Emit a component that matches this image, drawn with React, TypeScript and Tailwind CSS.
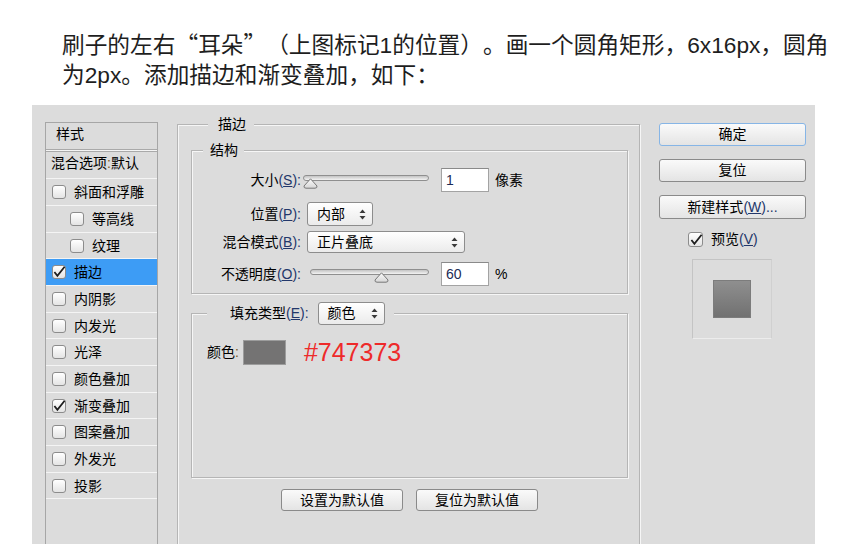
import React from "react"

const ui = { fontFamily: '"Liberation Sans", "Noto Sans CJK SC", sans-serif' }
const mn = "text-[#23376a]"

type Item = { t: string; h: string; sub?: boolean; checked?: boolean; active?: boolean }

const items: Item[] = [
  { t: "斜面和浮雕", h: "h-[27px]" },
  { t: "等高线", h: "h-[27px]", sub: true },
  { t: "纹理", h: "h-[26px]", sub: true },
  { t: "描边", h: "h-[27px]", checked: true, active: true },
  { t: "内阴影", h: "h-[27px]" },
  { t: "内发光", h: "h-[26px]" },
  { t: "光泽", h: "h-[27px]" },
  { t: "颜色叠加", h: "h-[27px]" },
  { t: "渐变叠加", h: "h-[26px]", checked: true },
  { t: "图案叠加", h: "h-[27px]" },
  { t: "外发光", h: "h-[27px]" },
  { t: "投影", h: "h-[26px]" },
]

function Check({ checked, size = "w-[14px] h-[14px]" }: { checked?: boolean; size?: string }) {
  return (
    <span className={`${size} shrink-0 rounded-[3px] border border-[#8c8c8c] bg-linear-to-b from-white to-[#e4e4e4] flex items-center justify-center overflow-visible`}>
      {checked && (
        <svg width="14" height="14" viewBox="0 0 14 14" className="overflow-visible">
          <path d="M2.4 7 L5.4 10.8 L12.6 1.8" fill="none" stroke="#1e1e1e" strokeWidth="1.8" />
        </svg>
      )}
    </span>
  )
}

function Arrows() {
  return (
    <svg width="7" height="11" viewBox="0 0 7 11">
      <polygon points="3.5,0.5 6.5,4 0.5,4" fill="#3a3a3a" />
      <polygon points="0.5,7 6.5,7 3.5,10.5" fill="#3a3a3a" />
    </svg>
  )
}

function Select({ text, w, h }: { text: string; w: string; h: string }) {
  return (
    <div className={`${w} ${h} rounded-[3px] border border-[#8d8d8d] bg-linear-to-b from-white to-[#ebebeb] flex items-center justify-between pl-[9px] pr-[6px] text-[14px] text-black`}>
      <span>{text}</span>
      <Arrows />
    </div>
  )
}

function Slider({ w, pos }: { w: string; pos: number }) {
  return (
    <div className={`${w} h-[24px] relative`}>
      <div className="absolute left-0 right-0 top-[7px] h-[6px] rounded-full border border-[#8f8f8f] bg-linear-to-b from-[#c4c4c4] to-[#f3f3f3]" />
      <svg width="15" height="11" viewBox="0 0 15 11" className="absolute top-[10px]" style={{ left: pos }}>
        <defs>
          <linearGradient id="thumb" x1="0" y1="0" x2="0" y2="1">
            <stop offset="0" stopColor="#fbfbfb" />
            <stop offset="1" stopColor="#d6d6d6" />
          </linearGradient>
        </defs>
        <path d="M7.5 0.8 L14 8 Q14.3 10.2 12 10.2 L3 10.2 Q0.7 10.2 1 8 Z" fill="url(#thumb)" stroke="#777" strokeWidth="1" />
      </svg>
    </div>
  )
}

function Input({ v }: { v: string }) {
  return (
    <div className="w-[48px] h-[24px] bg-white border border-[#a3a3a3] border-t-[#8a8a8a] flex items-center pl-[4px] text-[14px] text-[#1c2c55]">
      {v}
    </div>
  )
}

function Btn({ children, w, h, focus }: { children: React.ReactNode; w: string; h: string; focus?: boolean }) {
  return (
    <div className={`${w} ${h} rounded-[3px] border ${focus ? "border-[#86b5e6]" : "border-[#8a8a8a]"} bg-linear-to-b from-[#fafafa] to-[#e4e4e4] flex items-center justify-center text-[14px] text-black`}>
      {children}
    </div>
  )
}

const etched = "border border-[#b5b5b5] shadow-[inset_1px_1px_0_#f6f6f6,1px_1px_0_#f6f6f6]"
const cjk = "font-['Noto_Sans_CJK_SC']"

export default function App() {
  return (
    <div className="w-[850px] h-[552px] bg-white overflow-hidden">
      <div
        lang="zh-CN"
        className="h-[89px] overflow-hidden pl-[62px] pt-[29px] text-[22.7px] leading-[30px] text-[#1e1e1e] whitespace-nowrap [text-spacing-trim:space-all]"
        style={{ fontFamily: '"Liberation Sans", "Noto Sans CJK SC", sans-serif' }}
      >
        刷子的左右<span className={cjk}>“</span>耳朵<span className={cjk}>”</span>（上图标记1的位置）。画一个圆角矩形，6x16px，圆角
        <br />
        为2px。添加描边和渐变叠加，如下：
      </div>

      <div className="ml-[32px] mt-[16px] w-[783px] h-[439px] bg-[#dcdcdc] overflow-hidden flex items-start text-black" style={ui}>
        {/* style list */}
        <div className="ml-[13px] mt-[17px] w-[113px] h-[440px] border border-[#a6a6a6] text-[14px] shrink-0">
          <div className="h-[27px] border-b border-[#a9a9a9] pl-[10px] pt-[1px] leading-[20px]">样式</div>
          <div className="h-[1px] bg-[#f4f4f4]" />
          <div className="h-[28px] border-t border-b border-t-[#a9a9a9] border-b-[#f4f4f4] pl-[5px] pt-[1px] leading-[20px]">
            混合选项<span className="text-[#7a5a20]">:</span>默认
          </div>
          {items.map((it) => (
            <div
              key={it.t}
              className={`${it.h} border-b border-[#f4f4f4] flex items-center gap-[8px] ${it.sub ? "pl-[24px]" : "pl-[6px]"} ${it.active ? "bg-[#3d9cf5]" : ""}`}
            >
              <Check checked={it.checked} />
              <span className="leading-[18px]">{it.t}</span>
            </div>
          ))}
        </div>

        {/* main stroke group */}
        <fieldset className={`ml-[19px] mt-[10px] w-[463px] h-[460px] shrink-0 pl-[13px] pr-[11px] ${etched}`}>
          <legend className="ml-[17px] pl-[10px] pr-[8px] bg-[#dcdcdc] text-[14px] leading-[18px]">描边</legend>

          <fieldset className={`mt-[8px] w-[437px] pb-[7px] ${etched}`}>
            <legend className="ml-[11px] pl-[7px] pr-[6px] bg-[#dcdcdc] text-[14px] leading-[18px]">结构</legend>

            <div className="mt-[9px] h-[24px] flex items-center text-[14px]">
              <div className="w-[109px] text-right">
                大小<span className={mn}>(<span className="underline">S</span>):</span>
              </div>
              <div className="ml-[2px]">
                <Slider w="w-[126px]" pos={0} />
              </div>
              <div className="ml-[12px]"><Input v="1" /></div>
              <span className="ml-[6px]">像素</span>
            </div>

            <div className="mt-[10px] h-[24px] flex items-center text-[14px]">
              <div className="w-[109px] text-right">
                位置<span className={mn}>(<span className="underline">P</span>):</span>
              </div>
              <div className="ml-[6px]"><Select text="内部" w="w-[66px]" h="h-[24px]" /></div>
            </div>

            <div className="mt-[5px] h-[22px] flex items-center text-[14px]">
              <div className="w-[109px] text-right">
                混合模式<span className={mn}>(<span className="underline">B</span>):</span>
              </div>
              <div className="ml-[6px]"><Select text="正片叠底" w="w-[158px]" h="h-[22px]" /></div>
            </div>

            <div className="mt-[9px] h-[24px] flex items-center text-[14px]">
              <div className="w-[109px] text-right">
                不透明度<span className={mn}>(<span className="underline">O</span>):</span>
              </div>
              <div className="ml-[9px]">
                <Slider w="w-[119px]" pos={64} />
              </div>
              <div className="ml-[12px]"><Input v="60" /></div>
              <span className="ml-[6px]">%</span>
            </div>
          </fieldset>

          <fieldset className={`mt-[8px] w-[437px] pb-[112px] ${etched}`}>
            <legend className="ml-[15px] pl-[23px] pr-[9px] bg-[#dcdcdc] text-[14px] h-[23px]">
              <div className="flex items-center h-[23px]">
                <span>
                  填充类型<span className={mn}>(<span className="underline">E</span>):</span>
                </span>
                <div className="ml-[9px]"><Select text="颜色" w="w-[67px]" h="h-[23px]" /></div>
              </div>
            </legend>
            <div className="mt-[15px] ml-[15px] flex items-center h-[25px]">
              <span className="text-[14px]">颜色<span className="text-[#7a5a20]">:</span></span>
              <div className="ml-[4px] w-[43px] h-[25px] bg-[#747373] border border-[#9c9c9c]" />
              <span className="ml-[18px] text-[25px] leading-[25px] text-[#ee2a2a]" style={{ fontFamily: '"Liberation Sans", sans-serif' }}>
                #747373
              </span>
            </div>
          </fieldset>

          <div className="mt-[11px] flex justify-center gap-[13px]">
            <Btn w="w-[122px]" h="h-[22px]">设置为默认值</Btn>
            <Btn w="w-[122px]" h="h-[22px]">复位为默认值</Btn>
          </div>
        </fieldset>

        {/* right column */}
        <div className="ml-[19px] mt-[18px] w-[147px] shrink-0 flex flex-col">
          <Btn w="w-[147px]" h="h-[23px]" focus>确定</Btn>
          <div className="mt-[13px]"><Btn w="w-[147px]" h="h-[23px]">复位</Btn></div>
          <div className="mt-[13px]">
            <Btn w="w-[147px]" h="h-[24px]">
              新建样式<span className={mn}>(<span className="underline">W</span>)...</span>
            </Btn>
          </div>
          <div className="mt-[13px] pl-[29px] flex items-center gap-[8px] h-[15px] text-[14px]">
            <Check checked size="w-[15px] h-[15px]" />
            <span>
              预览<span className={mn}>(<span className="underline">V</span>)</span>
            </span>
          </div>
          <div className="mt-[12px] ml-[33px] w-[80px] h-[80px] border border-[#c4c4c4] border-b-[#ececec] border-r-[#d0d0d0] flex items-center justify-center">
            <div className="w-[38px] h-[38px] border border-[#7c7c7c] bg-linear-to-b from-[#8f8f8f] to-[#717171]" />
          </div>
        </div>
      </div>
    </div>
  )
}
